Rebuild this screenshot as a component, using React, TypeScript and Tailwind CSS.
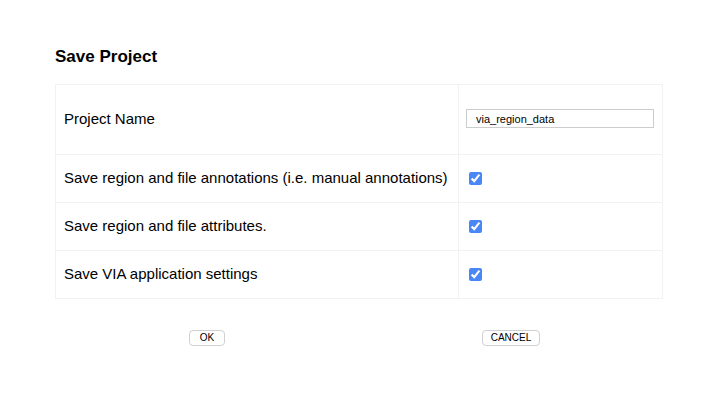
import { useState } from "react";

const rows = [
  "Save region and file annotations (i.e. manual annotations)",
  "Save region and file attributes.",
  "Save VIA application settings",
];

export default function App() {
  const [projectName, setProjectName] = useState("via_region_data");
  const [checked, setChecked] = useState([true, true, true]);

  return (
    <div className="w-[720px] h-[401px] bg-white font-['Liberation_Sans',Arial,sans-serif] text-black">
      <div className="pl-[55px] pr-[57px] pt-[47px]">
        <h1 className="text-[17px] font-bold leading-[20px] mb-[17px]">Save Project</h1>

        <div className="border border-[#f2f2f2]">
          <div className="grid grid-cols-[403px_1fr] h-[70px] border-b border-[#f2f2f2]">
            <div className="flex items-center pl-[8px] text-[15px] border-r border-[#f2f2f2]">Project Name</div>
            <div className="flex items-center pl-[7px] pr-[8px] pb-[2px]">
              <input
                value={projectName}
                onChange={(e) => setProjectName(e.target.value)}
                className="w-full h-[19px] border border-[#cccccc] px-[9px] text-[11px] outline-none"
              />
            </div>
          </div>
          {rows.map((label, i) => (
            <div
              key={label}
              className={`grid grid-cols-[403px_1fr] ${i < rows.length - 1 ? "h-[48px] border-b border-[#f2f2f2]" : "h-[47px]"}`}
            >
              <div className="flex items-center pl-[8px] text-[15px] border-r border-[#f2f2f2]">{label}</div>
              <div className="flex items-center pl-[10px]">
                <input
                  type="checkbox"
                  checked={checked[i]}
                  onChange={() => setChecked(checked.map((c, j) => (j === i ? !c : c)))}
                  className="w-[13px] h-[13px] m-0 accent-[#4a86f5]"
                />
              </div>
            </div>
          ))}
        </div>

        <div className="grid grid-cols-2 mt-[31px]">
          <div className="flex justify-center">
            <button className="h-[16px] px-[10px] text-[10px] leading-none border border-[#d0d0d0] rounded-[4px] bg-white">OK</button>
          </div>
          <div className="flex justify-center">
            <button className="h-[16px] px-[8px] text-[10px] leading-none border border-[#d0d0d0] rounded-[4px] bg-white">CANCEL</button>
          </div>
        </div>
      </div>
    </div>
  );
}
